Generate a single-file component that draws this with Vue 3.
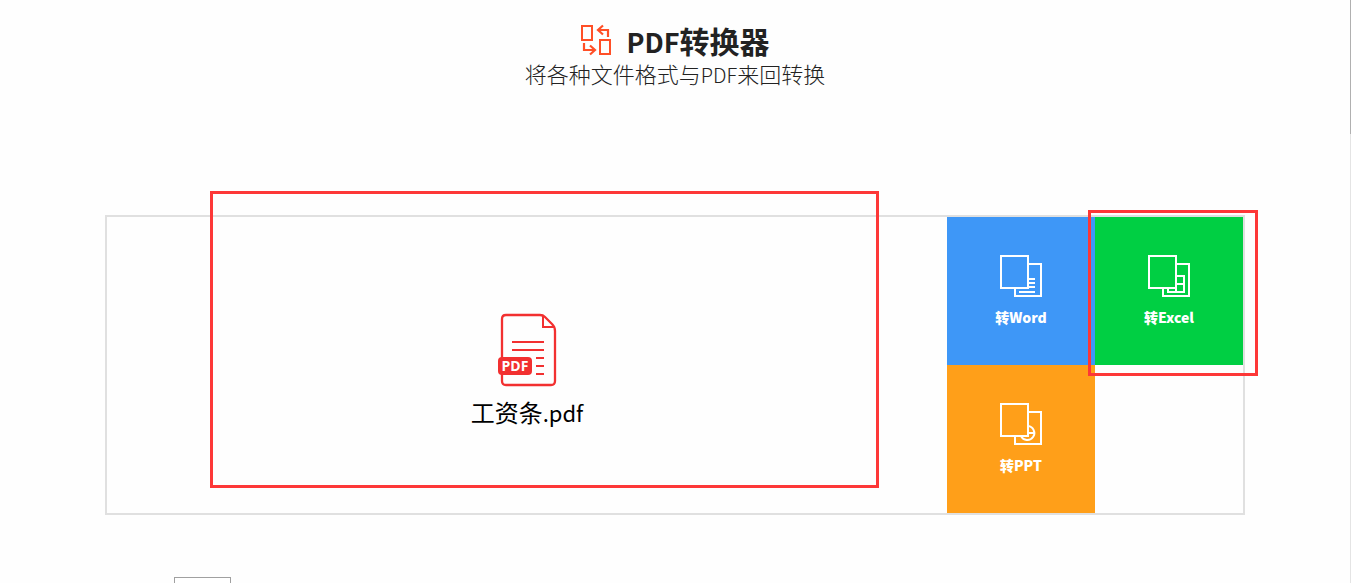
<script setup>
const tiles = [
  { key: 'word', label: '转Word' },
  { key: 'excel', label: '转Excel' },
  { key: 'ppt', label: '转PPT' },
]
</script>

<template>
  <div class="page">
    <main class="content">
      <header class="header">
        <div class="title-row">
          <svg class="logo" viewBox="0 0 32 32" width="32" height="32" fill="none" stroke="#ff4f27" stroke-width="2" aria-hidden="true">
            <path d="M2 2H12V16H2ZM20 16H30V30H20Z" />
            <path d="M28 13V6H18M23 1.5L18 6L23 10.500M4 19V26H14M10 21.500L15 26L10 30.500" stroke-width="2.200" />
          </svg>
          <h1><span class="latin">PDF</span>转换器</h1>
        </div>
        <p class="subtitle">将各种文件格式与<span class="latin">PDF</span>来回转换</p>
      </header>

      <section class="card">
        <div class="file">
          <svg class="file-icon" viewBox="0 0 60 74" width="60" height="74" fill="none" stroke="#f23030" stroke-width="2" aria-hidden="true">
            <path d="M43 2H9Q5 2 5 6V68Q5 72 9 72H54Q58 72 58 68V18Q58 14 55 11L48 4Q46 2 43 2" stroke-width="2.300" />
            <path d="M46 3V14H57" />
            <path d="M15 29H47M15 37H47M39 45H47M39 53H47M39 61H47" stroke-width="2.200" />
            <rect x="1" y="44" width="34" height="18" rx="4" fill="#f23030" stroke="none" />
            <text x="18" y="58" text-anchor="middle" fill="#fff" stroke="none">PDF</text>
          </svg>
          <span class="file-name">工资条<span class="latin">.pdf</span></span>
        </div>
        <div class="tiles">
          <button v-for="t in tiles" :key="t.key" type="button" class="tile" :class="t.key">
            <svg viewBox="0 0 42 42" width="42" height="42" fill="none" stroke="#fff" stroke-width="2" aria-hidden="true">
              <path d="M1 1H28V33H1Z" />
              <path d="M28 9H41V41H15V33" />
              <path v-if="t.key === 'word'" d="M28 24H35M28 28H35M28 32H35M19 37H35" />
              <path v-else-if="t.key === 'excel'" d="M28 21H36V37H20V33M28 29H36M28 33V37" />
              <path v-else d="M28 23A7 7 0 1 1 21 33M28 30H35" />
            </svg>
            <span>{{ t.label }}</span>
            <i v-if="t.key === 'excel'" class="mark mark-tile"></i>
          </button>
        </div>
        <i class="mark mark-file"></i>
      </section>

      <div class="hint"></div>
    </main>
    <div class="scrollbar"><div class="thumb"></div></div>
  </div>
</template>

<style>
body {
  margin: 0;
  background: #fefefe;
}
</style>

<style scoped>
.page {
  display: flex;
  height: 100vh;
  overflow: hidden;
  background: #fefefe;
  font-family: "Noto Sans CJK SC", sans-serif;
}

.content {
  flex: 1;
  min-width: 0;
}

.header {
  padding-top: 20px;
  color: #222;
  text-align: center;
}

.title-row {
  display: flex;
  align-items: center;
  justify-content: center;
  gap: 14px;
}

.latin {
  line-height: 1;
}

h1 {
  margin: 0;
  font-size: 30px;
  font-weight: 700;
  line-height: 40px;
}

h1 .latin {
  font-size: 27px;
}

.subtitle {
  margin: 0;
  font-size: 22px;
  font-weight: 300;
  line-height: 26px;
}

.subtitle .latin {
  font-size: 20px;
}

.card {
  position: relative;
  box-sizing: border-box;
  display: flex;
  width: 100%;
  max-width: 1140px;
  margin: 129px auto 62px;
  border: 2px solid #e0e0e0;
}

.file {
  flex: 1;
  display: flex;
  flex-direction: column;
  align-items: center;
  padding-top: 96px;
  color: #000;
}

.file-icon text {
  font-family: "Open Sans", sans-serif;
  font-size: 14px;
  font-weight: 700;
}

.file-name {
  margin-top: 8px;
  font-size: 24px;
  line-height: 34px;
}

.file-name .latin {
  font-size: 22px;
}

.tiles {
  display: grid;
  grid-template-columns: 148px 148px;
  grid-auto-rows: 148px;
}

.tile {
  position: relative;
  display: flex;
  flex-direction: column;
  align-items: center;
  gap: 10px;
  padding: 38px 0 0;
  border: 0;
  color: #fff;
  font-family: inherit;
  font-size: 14px;
  font-weight: 900;
  line-height: 20px;
  cursor: pointer;
}

.word {
  background: #3e97f7;
}

.excel {
  background: #00cf43;
}

.ppt {
  background: #ff9f19;
}

.mark {
  position: absolute;
  box-sizing: border-box;
  border: 3px solid #fd3737;
  pointer-events: none;
}

.mark-file {
  top: -26px;
  left: 103px;
  width: 669px;
  height: 297px;
}

.mark-tile {
  top: -7px;
  left: -7px;
  z-index: 1;
  width: 170px;
  height: 166px;
}

.hint {
  box-sizing: border-box;
  width: 57px;
  height: 24px;
  margin-left: 174px;
  border: 1px solid #a0a0a0;
  background: #fff;
}

.scrollbar {
  width: 1px;
  background: #e4e4e4;
}

.thumb {
  height: 134px;
  background: #b0b0b0;
}
</style>
